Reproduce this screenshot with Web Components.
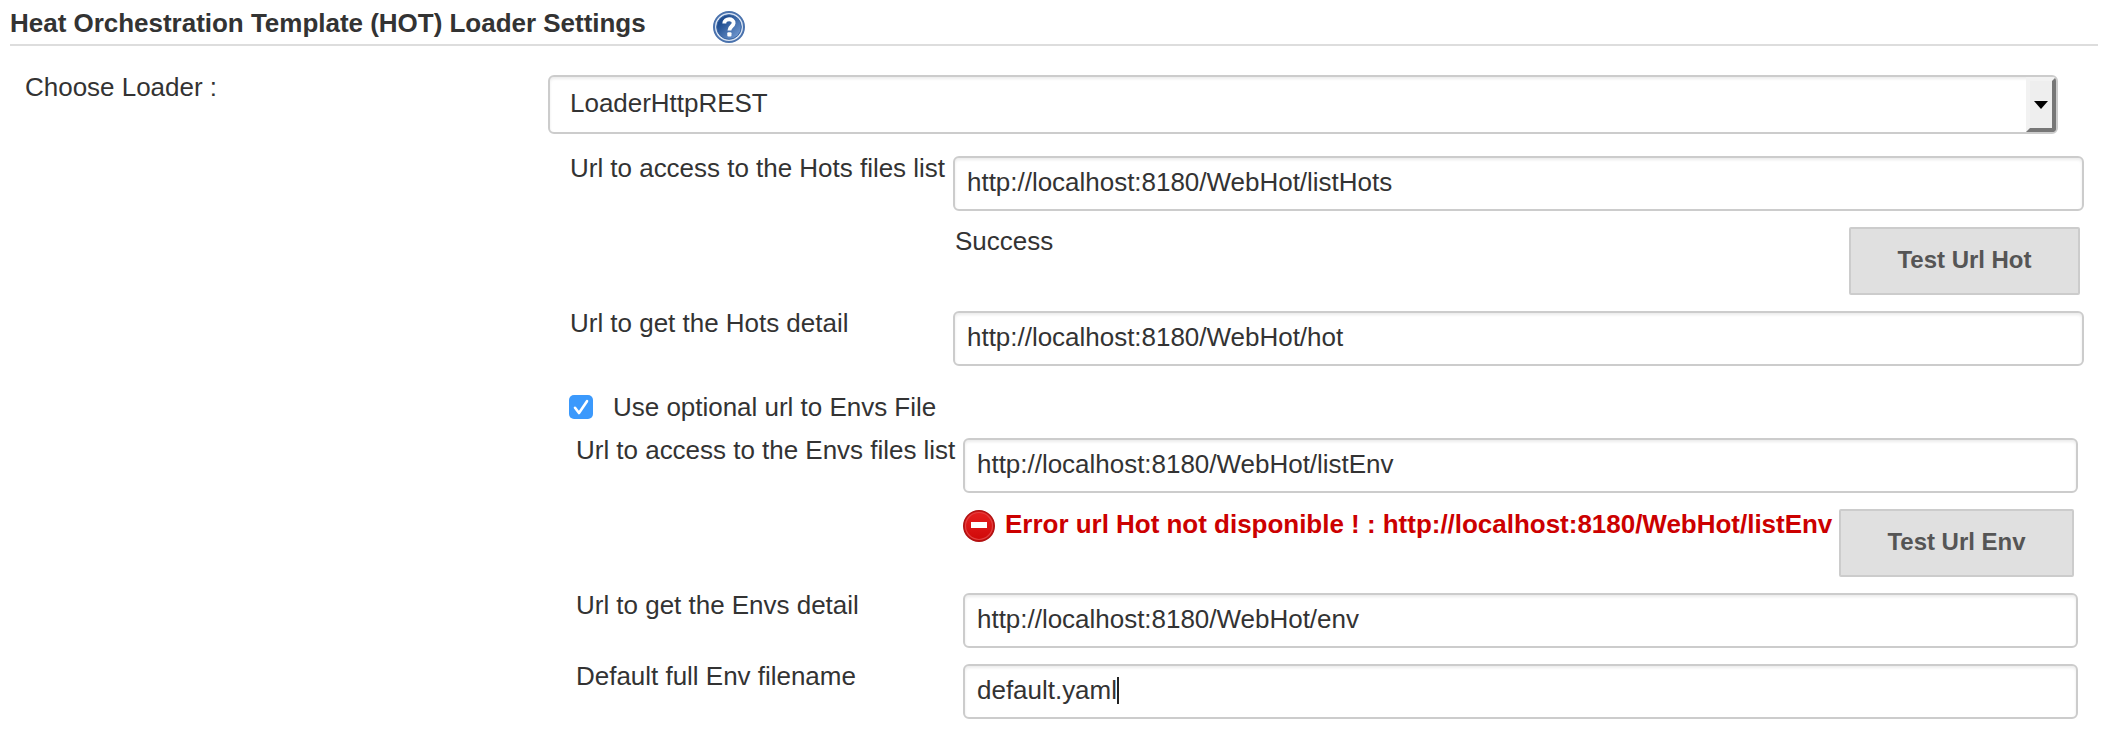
<!DOCTYPE html>
<html lang="en">
<head>
<meta charset="utf-8">
<title>HOT Loader Settings</title>
<style>
body{margin:0;background:#fff;color:#333;font:26px/30px "Liberation Sans",Arial,sans-serif;letter-spacing:-.02px}
</style>
</head>
<body>
<hot-settings></hot-settings>
<script>
const define=(name,html)=>customElements.define(name,class extends HTMLElement{
  constructor(){super();this.attachShadow({mode:'open'}).innerHTML=html;}
});

define('help-icon',`<style>:host{display:block;width:32px;height:32px}svg{display:block}</style>
<svg width="32" height="32" viewBox="0 0 32 32"><defs><linearGradient id="g" x1="0" y1="0" x2="1" y2="1"><stop offset=".25" stop-color="#1f4d90"/><stop offset="1" stop-color="#7fa5da"/></linearGradient></defs>
<circle cx="16" cy="16" r="15" fill="#dce6f4" stroke="#4a72ad" stroke-width="2"/><circle cx="16" cy="16" r="12.3" fill="url(#g)" stroke="#3a66a5" stroke-width="1"/>
<path d="M11.3 12.6C11.3 6.8 21 7 20.6 12.3C20.3 15.3 16.4 15.3 16.4 19.4" fill="none" stroke="#fff" stroke-width="3.9"/><rect x="14.3" y="21.2" width="4.2" height="4.2" rx="1" fill="#fff"/></svg>`);

define('error-icon',`<style>:host{display:block;width:32px;height:32px}svg{display:block}</style>
<svg width="32" height="32" viewBox="0 0 32 32"><defs><linearGradient id="g" x1="0" y1="0" x2="0" y2="1"><stop stop-color="#e62020"/><stop offset="1" stop-color="#cf0808"/></linearGradient></defs>
<circle cx="16" cy="16" r="15.2" fill="url(#g)" stroke="#b01212" stroke-width="1.6"/><circle cx="16" cy="16" r="13.5" fill="none" stroke="#e04040" stroke-width="1.2"/><rect x="8" y="12" width="16" height="6" fill="#fff"/></svg>`);

define('check-box',`<style>:host{display:block;width:24px;height:24px}svg{display:block}</style>
<svg width="24" height="24" viewBox="0 0 24 24"><rect width="24" height="24" rx="5" fill="#3b99fc"/><path d="M6 12.8L10 18L18 6.2" fill="none" stroke="#fff" stroke-width="2.6" stroke-linecap="round" stroke-linejoin="round"/></svg>`);

define('text-field',`<style>:host{display:flex;box-sizing:border-box;height:55px;border:2px solid #ccc;border-radius:6px;box-shadow:inset 0 2px 3px rgba(0,0,0,.08);padding:9px 12px 0;white-space:nowrap}</style><slot></slot>`);

define('text-caret',`<style>:host{display:block;width:2px;height:27px;background:#222;margin-top:2px}</style>`);

define('push-button',`<style>:host{display:block;box-sizing:border-box;height:68px;border:2px solid #ccc;border-radius:2px;background:#e0e0e0;color:#555;font-weight:bold;font-size:24px;line-height:30px;padding-top:16px;text-align:center;white-space:nowrap}</style><slot></slot>`);

define('loader-select',`<style>:host{display:flex;box-sizing:border-box;height:59px;border:2px solid #ccc;border-radius:6px;box-shadow:inset 0 2px 3px rgba(0,0,0,.08);justify-content:space-between}
.t{padding:11px 0 0 20px}
.b{box-sizing:border-box;width:30px;height:55px;border:4px solid;border-color:#f2f2f2 #777 #777 #f2f2f2;border-radius:0 4px 4px 0;background:#eee;display:flex;align-items:center;justify-content:center}</style>
<span class="t"><slot></slot></span><span class="b"><svg width="14" height="8" viewBox="0 0 14 8"><path d="M0 0H14L7 8Z" fill="#000"/></svg></span>`);

define('form-row',`<style>:host{display:grid;grid-template-columns:var(--label) var(--field);white-space:nowrap}
.l{margin-top:-1px}
.f{display:flex;flex-direction:column;gap:16px;padding-top:2px}</style>
<div class="l"><slot name="label"></slot></div><div class="f"><slot></slot></div>`);

define('status-line',`<style>:host{display:flex;justify-content:space-between;align-items:flex-start;height:68px}.m{display:flex;align-items:flex-start}</style>
<div class="m"><slot></slot></div><slot name="action"></slot>`);

define('hot-settings',`<style>
:host{display:block;padding:0 22px 0 10px}
header{display:flex;height:44px;border-bottom:2px solid #ddd;font-weight:bold}
header span{margin-top:8px;width:703px;white-space:nowrap}
header help-icon{margin-top:11px}
main{display:grid;grid-template-columns:523px 1fr;padding:29px 0 0 15px}
.choose{margin-top:-3px}
loader-select{width:1510px}
.group{display:flex;flex-direction:column;padding:20px 0 0 22px;gap:16px}
.hot{--label:383px;--field:1131px}
.env{--label:387px;--field:1115px;margin-left:6px}
.opt{display:flex;align-items:flex-start;margin:13px 0 -8px -1px;height:33px}
.opt check-box{margin:0 20px 0 0}
.opt span{margin-top:-3px}
.ok{margin:-1px 0 0 2px}
.b1{width:231px;margin-right:4px}.b2{width:235px;margin-right:4px}
.err{color:#c00;font-weight:bold;margin:0 0 0 10px}
error-icon{margin-top:1px}
</style>
<header><span>Heat Orchestration Template (HOT) Loader Settings</span><help-icon></help-icon></header>
<main><div class="choose">Choose Loader :</div>
<div><loader-select>LoaderHttpREST</loader-select>
<div class="group">
<form-row class="hot"><span slot="label">Url to access to the Hots files list</span><text-field>http://localhost:8180/WebHot/listHots</text-field>
<status-line><span class="ok">Success</span><push-button slot="action" class="b1">Test Url Hot</push-button></status-line></form-row>
<form-row class="hot" style="margin-top:-2px"><span slot="label">Url to get the Hots detail</span><text-field>http://localhost:8180/WebHot/hot</text-field></form-row>
<div class="opt"><check-box></check-box><span>Use optional url to Envs File</span></div>
<form-row class="env"><span slot="label">Url to access to the Envs files list</span><text-field>http://localhost:8180/WebHot/listEnv</text-field>
<status-line><error-icon></error-icon><span class="err">Error url Hot not disponible ! : http://localhost:8180/WebHot/listEnv</span><push-button slot="action" class="b2">Test Url Env</push-button></status-line></form-row>
<form-row class="env" style="margin-top:-2px"><span slot="label">Url to get the Envs detail</span><text-field>http://localhost:8180/WebHot/env</text-field></form-row>
<form-row class="env" style="margin-top:-2px"><span slot="label">Default full Env filename</span><text-field>default.yaml<text-caret></text-caret></text-field></form-row>
</div></div></main>`);
</script>
</body>
</html>
